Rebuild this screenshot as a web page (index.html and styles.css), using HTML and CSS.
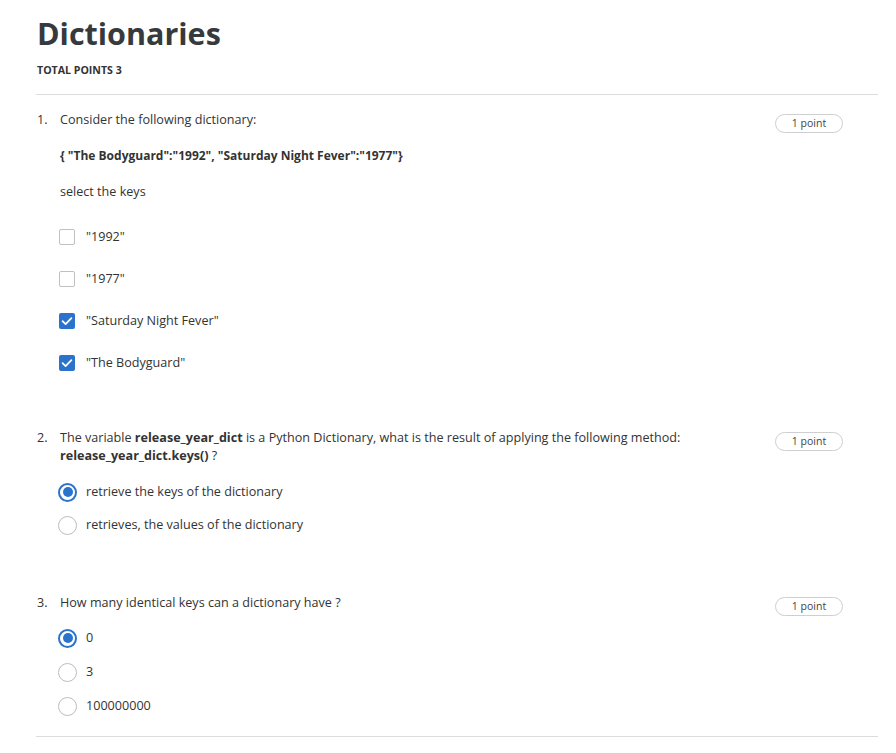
FILE: index.html
```html
<!DOCTYPE html>
<html>
<head>
<meta charset="utf-8">
<link rel="stylesheet" href="styles.css">
</head>
<body>
<div class="page">
  <h1 class="title">Dictionaries</h1>
  <div class="total">TOTAL POINTS 3</div>
  <hr class="rule rule-top">

  <div class="question q1">
    <div class="num">1.</div>
    <div class="body">
      <p class="line">Consider the following dictionary:</p>
      <p class="line dict spaced">{ "The Bodyguard":"1992", "Saturday Night Fever":"1977"}</p>
      <p class="line spaced">select the keys</p>
      <div class="options checks">
        <div class="opt"><span class="box"></span><span>"1992"</span></div>
        <div class="opt"><span class="box"></span><span>"1977"</span></div>
        <div class="opt"><span class="box on"><svg viewBox="0 0 16 16" width="16" height="16"><path d="M3.6 8.2 L6.6 11.1 L12.4 5.2" fill="none" stroke="#fff" stroke-width="1.8" stroke-linecap="round" stroke-linejoin="round"/></svg></span><span>"Saturday Night Fever"</span></div>
        <div class="opt"><span class="box on"><svg viewBox="0 0 16 16" width="16" height="16"><path d="M3.6 8.2 L6.6 11.1 L12.4 5.2" fill="none" stroke="#fff" stroke-width="1.8" stroke-linecap="round" stroke-linejoin="round"/></svg></span><span>"The Bodyguard"</span></div>
      </div>
    </div>
    <div class="pill">1 point</div>
  </div>

  <div class="question q2">
    <div class="num">2.</div>
    <div class="body">
      <p class="line">The variable <b>release_year_dict</b> is a Python Dictionary, what is the result of applying the following method:<br><b>release_year_dict.keys()</b> ?</p>
      <div class="options radios">
        <div class="opt"><span class="radio on"></span><span>retrieve the keys of the dictionary</span></div>
        <div class="opt"><span class="radio"></span><span>retrieves, the values of the dictionary</span></div>
      </div>
    </div>
    <div class="pill">1 point</div>
  </div>

  <div class="question q3">
    <div class="num">3.</div>
    <div class="body">
      <p class="line">How many identical keys can a dictionary have ?</p>
      <div class="options radios r3">
        <div class="opt"><span class="radio on"></span><span>0</span></div>
        <div class="opt"><span class="radio"></span><span>3</span></div>
        <div class="opt"><span class="radio"></span><span>100000000</span></div>
      </div>
    </div>
    <div class="pill">1 point</div>
  </div>

  <hr class="rule rule-bottom">
</div>
</body>
</html>
```

FILE: styles.css
```css
html, body {
  margin: 0;
  padding: 0;
  background: #fff;
}
body {
  font-family: "Open Sans", "DejaVu Sans", sans-serif;
  color: #333;
  font-size: 12.6px;
}
.page {
  width: 842px;
  padding: 14px 0 0 36px;
}
.title {
  margin: 0;
  font-size: 30.5px;
  line-height: 38px;
  font-weight: 700;
  color: #373a3c;
  padding-left: 1px;
}
.total {
  margin-top: 11px;
  font-size: 10.6px;
  line-height: 14px;
  font-weight: 700;
  padding-left: 1px;
  color: #333;
}
.rule {
  border: 0;
  border-top: 1px solid #dcdcdc;
  margin: 0;
  width: 842px;
}
.rule-top {
  margin-top: 17px;
}
.rule-bottom {
  margin-top: 21px;
}
.question {
  display: flex;
  align-items: flex-start;
}
.q1 { margin-top: 16px; }
.q2 { margin-top: 57px; }
.q3 { margin-top: 60px; }
.num {
  width: 23px;
  padding-left: 1px;
  line-height: 18px;
}
.body {
  flex: 1;
}
.line {
  margin: 0;
  line-height: 18px;
}
b {
  font-weight: 700;
}
.dict {
  font-weight: 700;
  font-size: 12px;
}
.spaced {
  margin-top: 18px;
}
.pill {
  margin: 3px 35px 0 20px;
  width: 66px;
  height: 17px;
  border: 1px solid #cfcfcf;
  border-radius: 10px;
  font-size: 10.5px;
  line-height: 17px;
  text-align: center;
  color: #444;
}
.options {
  display: flex;
  flex-direction: column;
}
.checks {
  margin-top: 27px;
  gap: 24px;
}
.radios {
  margin-top: 18px;
  gap: 15px;
}
.r3 {
  margin-top: 17px;
  gap: 16px;
}
.opt {
  display: flex;
  align-items: center;
  height: 18px;
  line-height: 18px;
}
.box {
  box-sizing: border-box;
  width: 16px;
  height: 16px;
  border: 1.5px solid #c0c0c0;
  border-radius: 2px;
  margin-left: -1px;
  margin-right: 11px;
  flex: none;
  display: flex;
}
.box.on {
  border: 0;
  background: #2a73cc;
}
.radio {
  box-sizing: border-box;
  width: 19px;
  height: 19px;
  border: 1.5px solid #bdbdbd;
  border-radius: 50%;
  margin-left: -2px;
  margin-right: 9px;
  flex: none;
  position: relative;
}
.radio.on {
  border: 2px solid #2a73cc;
}
.radio.on::after {
  content: "";
  position: absolute;
  left: 2.5px;
  top: 2.5px;
  width: 10px;
  height: 10px;
  border-radius: 50%;
  background: #2a73cc;
}
```
